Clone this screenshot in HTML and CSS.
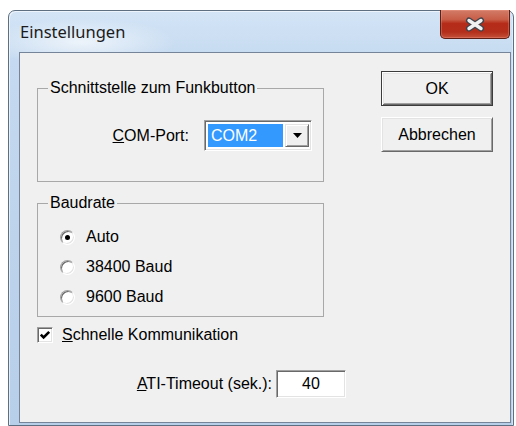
FILE: index.html
```html
<!DOCTYPE html>
<html lang="de">
<head>
<meta charset="utf-8">
<title>Einstellungen</title>
<link rel="stylesheet" href="styles.css">
</head>
<body>
<div class="window">
  <div class="titlebar">
    <span class="title">Einstellungen</span>
    <div class="close" role="button" aria-label="Schließen">
      <svg width="22" height="15" viewBox="0 0 22 15">
        <path d="M5 3.5 L17 11.5 M17 3.5 L5 11.5" stroke="#3f444c" stroke-width="6" stroke-linecap="round" fill="none"/>
        <path d="M5 3.5 L17 11.5 M17 3.5 L5 11.5" stroke="#f0f0f0" stroke-width="3.4" stroke-linecap="round" fill="none"/>
      </svg>
    </div>
  </div>
  <div class="client">
    <div class="col-main">
      <fieldset class="group group-port">
        <legend>Schnittstelle zum Funkbutton</legend>
        <div class="port-row">
          <span class="port-label"><u>C</u>OM-Port:</span>
          <div class="combo sunken">
            <span class="combo-value">COM2</span>
            <span class="combo-btn">
              <svg width="9" height="5" viewBox="0 0 9 5"><path d="M0 0 H9 L4.5 5 Z" fill="#000"/></svg>
            </span>
          </div>
        </div>
      </fieldset>

      <fieldset class="group group-baud">
        <legend>Baudrate</legend>
        <div class="radio-row"><span class="radio sunken checked"></span><span>Auto</span></div>
        <div class="radio-row"><span class="radio sunken"></span><span>38400 Baud</span></div>
        <div class="radio-row"><span class="radio sunken"></span><span>9600 Baud</span></div>
      </fieldset>

      <div class="check-row">
        <span class="check sunken">
          <svg width="12" height="12" viewBox="0 0 12 12"><path d="M1.8 5.6 L4.6 8.4 L10.2 2.8" stroke="#000" stroke-width="2.6" fill="none"/></svg>
        </span>
        <span><u>S</u>chnelle Kommunikation</span>
      </div>

      <div class="timeout-row">
        <span class="timeout-label"><u>A</u>TI-Timeout (sek.):</span>
        <span class="field sunken">40</span>
      </div>
    </div>

    <div class="col-buttons">
      <button class="btn btn-default" type="button">OK</button>
      <button class="btn" type="button">Abbrechen</button>
    </div>
  </div>
</div>
</body>
</html>
```

FILE: styles.css
```css
html, body {
  margin: 0;
  background: #ffffff;
}

body {
  font-family: "Liberation Sans", Arial, sans-serif;
  font-size: 16px;
  color: #000;
}

/* Aero-style window frame */
.window {
  box-sizing: border-box;
  width: 506px;
  height: 416px;
  margin: 10px 0 0 8px;
  border: 1px solid #5e6f82;
  border-radius: 7px 7px 0 0;
  display: flex;
  flex-direction: column;
  background:
    radial-gradient(ellipse 95px 24px at 72px 31px, rgba(255,255,255,0.65), rgba(255,255,255,0) 100%),
    linear-gradient(180deg, #d3e4f6 0%, #c5daf0 12%, #bdd3ec 55%, #b8cfea 100%);
  box-shadow: inset 1px 1px 0 rgba(255,255,255,0.6), inset -1px 0 0 rgba(255,255,255,0.4);
}

.titlebar {
  height: 41px;
  flex: none;
  display: flex;
  align-items: center;
  padding-left: 11px;
}

.title {
  font-family: "Noto Sans", "Open Sans", sans-serif;
  font-size: 16.5px;
  color: #1b1b1b;
  line-height: 20px;
}

/* red caption close button */
.close {
  box-sizing: border-box;
  align-self: flex-start;
  margin: -1px 3px 0 auto;
  width: 70px;
  height: 29px;
  border: 1px solid #5e1f16;
  border-top: none;
  border-radius: 0 0 5px 5px;
  background-color: #b8311e;
  background-image: linear-gradient(180deg, #d27c68 0%, #c85d47 34%, #b52c19 48%, #b32e1b 78%, #c4513a 100%);
  box-shadow: inset 0 0 0 1px rgba(255,170,150,0.3);
  display: flex;
  align-items: center;
  justify-content: center;
}

.close svg {
  display: block;
}

/* dialog client area */
.client {
  flex: 1;
  margin: 0 2px 2px 10px;
  border: 1px solid #76849a;
  background: #f0f0f0;
  display: grid;
  grid-template-columns: 287px 112px;
  column-gap: 57px;
  align-items: start;
  padding: 18px 0 0 17px;
}

.col-main {
  padding-top: 9px;
  display: flex;
  flex-direction: column;
}

/* group boxes */
.group {
  box-sizing: border-box;
  width: 287px;
  margin: 0;
  border: 1px solid #a8a8a8;
  min-inline-size: 0;
}

.group legend {
  margin-left: 10px;
  padding: 0 2px;
  line-height: 16px;
}

.group-port {
  padding: 24px 0 30px 0;
}

.group-baud {
  margin-top: 13px;
  padding: 11px 0 4px 0;
}

.port-row {
  display: grid;
  grid-template-columns: 151px 108px;
  column-gap: 15px;
  align-items: center;
}

.port-label {
  text-align: right;
}

/* classic sunken 3D edge */
.sunken {
  box-sizing: border-box;
  border: 1px solid;
  border-color: #a0a0a0 #ffffff #ffffff #a0a0a0;
  box-shadow: inset 1px 1px 0 #696969, inset -1px -1px 0 #e3e3e3;
  background: #fff;
}

.combo {
  height: 31px;
  display: flex;
  padding: 3px 2px 3px 3px;
  gap: 2px;
}

.combo-value {
  flex: 1;
  background: #3399ff;
  color: #fff;
  padding-left: 3px;
  display: flex;
  align-items: center;
}

.combo-btn {
  box-sizing: border-box;
  width: 24px;
  background: #f0f0f0;
  border: 1px solid;
  border-color: #e3e3e3 #696969 #696969 #e3e3e3;
  box-shadow: inset 1px 1px 0 #fff, inset -1px -1px 0 #a0a0a0;
  display: flex;
  align-items: center;
  justify-content: center;
}

.radio-row {
  height: 30px;
  display: flex;
  align-items: center;
  gap: 11px;
  padding-left: 22px;
}

.radio {
  width: 15px;
  height: 15px;
  border-radius: 50%;
  position: relative;
}

.radio.checked::after {
  content: "";
  position: absolute;
  left: 4px;
  top: 4px;
  width: 5px;
  height: 5px;
  border-radius: 50%;
  background: #000;
}

.check-row {
  margin-top: 8px;
  height: 20px;
  display: flex;
  align-items: center;
  gap: 9px;
}

.check {
  width: 16px;
  height: 16px;
  display: flex;
  align-items: center;
  justify-content: center;
}

.check svg {
  display: block;
}

.timeout-row {
  margin-top: 25px;
  display: grid;
  grid-template-columns: 235px 70px;
  column-gap: 4px;
  align-items: center;
}

.timeout-label {
  text-align: right;
}

.field {
  height: 28px;
  display: flex;
  align-items: center;
  justify-content: center;
}

/* push buttons */
.col-buttons {
  display: flex;
  flex-direction: column;
  gap: 11px;
}

.btn {
  box-sizing: border-box;
  height: 35px;
  width: 112px;
  padding: 0;
  font: inherit;
  color: #000;
  background: #f0f0f0;
  border: 1px solid;
  border-color: #ffffff #696969 #696969 #ffffff;
  box-shadow: inset 1px 1px 0 #e3e3e3, inset -1px -1px 0 #a0a0a0;
}

.btn-default {
  border: 1px solid #3c3c3c;
  box-shadow: inset 1px 1px 0 #fff, inset -1px -1px 0 #696969, inset 2px 2px 0 #e3e3e3, inset -2px -2px 0 #a0a0a0;
}
```
